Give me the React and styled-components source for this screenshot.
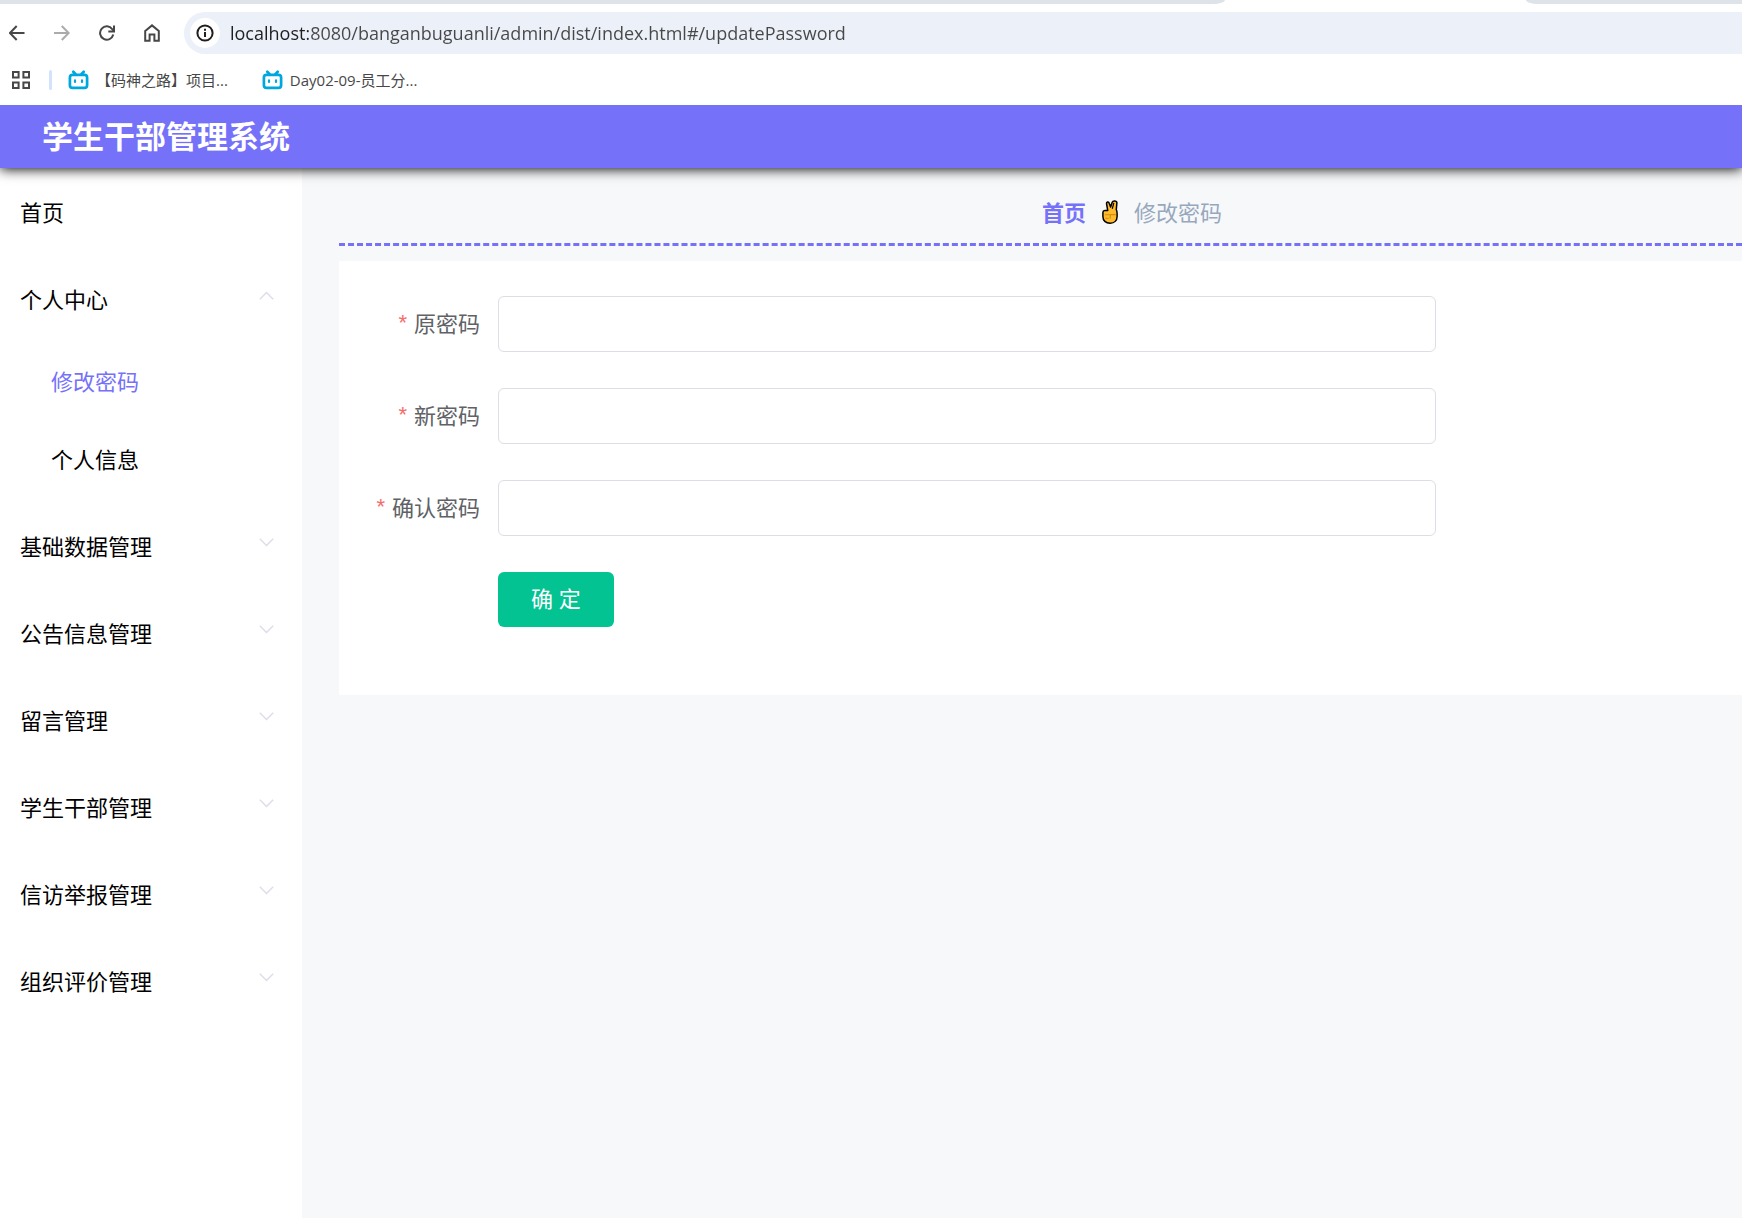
import React from "react";
import styled, { createGlobalStyle } from "styled-components";

const colors = {
  primary: "#7571f9",
  page: "#f7f8fa",
  success: "#02c391",
  label: "#606266",
  muted: "#97a8be",
  danger: "#f56c6c",
  border: "#dcdde6",
  chrome: "#474747",
};

const GlobalStyle = createGlobalStyle`
  *, *::before, *::after { box-sizing: border-box; }
  html, body { margin: 0; padding: 0; }
  body {
    background: #fff;
    font-family: "Open Sans", "Noto Sans CJK SC", sans-serif;
  }
  button, input { font-family: inherit; }
`;

const Page = styled.div`
  display: flex;
  flex-direction: column;
  min-height: 100vh;
`;

/* ---------- browser chrome ---------- */

const TabStrip = styled.div`
  display: flex;
  justify-content: space-between;
  height: 4px;
`;

const TabEdge = styled.div`
  flex: ${(p) => p.$grow} 1 0;
  background: #dee3ea;
  border-radius: ${(p) => (p.$side === "left" ? "0 0 12px 0 / 0 0 4px 0" : "0 0 0 12px / 0 0 0 4px")};
`;

const ActiveTab = styled.div`
  flex: 301 1 0;
`;

const Toolbar = styled.div`
  display: flex;
  align-items: center;
  padding: 8px 0 0 4px;
`;

const NavButton = styled.button`
  display: flex;
  align-items: center;
  justify-content: center;
  width: 25px;
  height: 25px;
  margin-right: 20px;
  padding: 0;
  border: 0;
  background: none;
  color: ${colors.chrome};
  opacity: ${(p) => (p.disabled ? 0.45 : 1)};
`;

const AddressBar = styled.div`
  flex: 1;
  display: flex;
  align-items: center;
  gap: 10px;
  height: 42px;
  padding-left: 6px;
  border-radius: 21px 0 0 21px;
  background: #ebf0f9;
`;

const SiteInfo = styled.button`
  display: flex;
  align-items: center;
  justify-content: center;
  width: 30px;
  height: 30px;
  padding: 0;
  border: 0;
  border-radius: 50%;
  background: #fff;
  color: #1f1f1f;
`;

const UrlInput = styled.input`
  flex: 1;
  min-width: 0;
  height: 30px;
  padding: 0;
  border: 0;
  outline: 0;
  color: ${colors.chrome};
  font-size: 18px;
  background: linear-gradient(90deg, #1f1f1f 78px, ${colors.chrome} 78px);
  background-clip: text;
  -webkit-background-clip: text;
  -webkit-text-fill-color: transparent;
`;

const Bookmarks = styled.nav`
  display: flex;
  align-items: center;
  height: 51px;
  padding-left: 12px;
`;

const AppsButton = styled.button`
  display: flex;
  padding: 0;
  border: 0;
  background: none;
  color: ${colors.chrome};
`;

const Divider = styled.span`
  width: 3px;
  height: 20px;
  margin: 0 16px 0 19px;
  border-radius: 2px;
  background: #d3e3fd;
`;

const Bookmark = styled.a`
  display: flex;
  align-items: center;
  gap: 7px;
  margin-right: 34px;
  color: ${colors.chrome};
  font-size: 15px;
  line-height: 20px;
  text-decoration: none;
  white-space: nowrap;
`;

/* ---------- application ---------- */

const Application = styled.div`
  flex: 1;
  display: flex;
  flex-direction: column;
  overflow: hidden;
`;

const Header = styled.header`
  position: relative;
  z-index: 1;
  padding: 8px 42px;
  background: ${colors.primary};
  box-shadow: 0 1px 12px #000;
`;

const Title = styled.h1`
  margin: 0;
  color: #fff;
  font-size: 31px;
  line-height: 47px;
  font-weight: 700;
`;

const Body = styled.div`
  flex: 1;
  display: flex;
`;

const Sidebar = styled.nav`
  flex: none;
  width: 302px;
  background: #fff;
`;

const MenuList = styled.ul`
  margin: 0;
  padding: 0;
  list-style: none;
`;

const SubMenuList = styled(MenuList)`
  padding-bottom: 4px;
`;

const MenuButton = styled.button`
  display: flex;
  align-items: center;
  justify-content: space-between;
  width: 100%;
  height: 87px;
  padding: 0 28px 0 20px;
  border: 0;
  background: none;
  color: #000;
  font-size: 22px;
  line-height: 32px;
  text-align: left;
`;

const MenuArrow = styled.svg`
  flex: none;
  margin-bottom: 6px;
  transform: ${(p) => (p.$open ? "rotate(180deg)" : "none")};
`;

const SubLink = styled.a`
  display: flex;
  align-items: center;
  height: 78px;
  padding-left: 51px;
  color: ${(p) => (p.$active ? colors.primary : "#000")};
  font-size: 22px;
  line-height: 32px;
  text-decoration: none;
`;

const Main = styled.main`
  flex: 1;
  min-width: 0;
  padding-left: 37px;
  background: ${colors.page};
`;

const Breadcrumb = styled.nav`
  display: flex;
  align-items: center;
  justify-content: center;
  gap: 16px;
  padding: 28px 0 15px 183px;
  border-bottom: 3px dashed ${colors.primary};
  font-size: 22px;
  line-height: 32px;
`;

const HomeLink = styled.a`
  color: ${colors.primary};
  font-weight: 700;
  text-decoration: none;
`;

const Current = styled.span`
  color: ${colors.muted};
`;

const Card = styled.section`
  margin-top: 15px;
  padding: 35px 36px 68px;
  background: #fff;
`;

const Form = styled.form`
  display: flex;
  flex-direction: column;
  gap: 36px;
  max-width: 1061px;
`;

const FormRow = styled.div`
  display: flex;
  align-items: center;
  padding-left: ${(p) => (p.$offset ? "123px" : "0")};
`;

const Label = styled.label`
  flex: none;
  display: flex;
  justify-content: flex-end;
  gap: 7px;
  width: 123px;
  padding: 0 18px 2px 0;
  color: ${colors.label};
  font-size: 22px;
  line-height: 32px;
  white-space: nowrap;
`;

const Required = styled.span`
  color: ${colors.danger};
  font-family: "Liberation Sans", sans-serif;
`;

const TextInput = styled.input`
  flex: 1;
  min-width: 0;
  height: 56px;
  padding: 0 16px;
  border: 1px solid ${colors.border};
  border-radius: 6px;
  background: #fff;
  color: ${colors.label};
  font-size: 22px;
`;

const SubmitButton = styled.button`
  height: 55px;
  padding: 0 33px 4px;
  border: 0;
  border-radius: 6px;
  background: ${colors.success};
  color: #fff;
  font-size: 22px;
  line-height: 32px;
`;

/* ---------- icons ---------- */

const strokeProps = { fill: "none", stroke: "currentColor", strokeWidth: 2 };

const BackIcon = () => (
  <svg width="16" height="16" viewBox="0 0 16 16" {...strokeProps}>
    <path d="M7.700 1 .9 8l6.800 7M1 8h14.500" />
  </svg>
);

const ForwardIcon = () => (
  <svg width="16" height="16" viewBox="0 0 16 16" {...strokeProps}>
    <path d="m7.800 1 6.900 7-6.900 7M14.500 8H0" />
  </svg>
);

const ReloadIcon = () => (
  <svg width="16" height="16" viewBox="0 0 16 16" {...strokeProps}>
    <path d="M14.300 9.600A6.700 6.700 0 1 1 13.300 4.200L14.600 6" />
    <path d="M15 .5v6H9.300" />
  </svg>
);

const HomeIcon = () => (
  <svg width="16" height="18" viewBox="0 0 16 18" {...strokeProps}>
    <path d="M1.200 7 8 1.400 14.800 7v9.800h-4.400v-6.200H5.600v6.200H1.200Z" />
  </svg>
);

const InfoIcon = () => (
  <svg width="18" height="18" viewBox="0 0 18 18" {...strokeProps}>
    <circle cx="9" cy="9" r="7.600" />
    <path d="M9 8v5M9 4.800v2" />
  </svg>
);

const AppsIcon = () => (
  <svg width="18" height="18" viewBox="0 0 18 18" {...strokeProps}>
    <path d="M1 1h5.600v5.600H1zM11.400 1H17v5.600h-5.600zM1 11.400h5.600V17H1zM11.400 11.400H17V17h-5.600z" />
  </svg>
);

const TvIcon = () => (
  <svg width="21" height="20" viewBox="0 0 21 20" fill="none" stroke="#00a7de" strokeWidth="2.700" strokeLinecap="round">
    <rect x="1.900" y="4.900" width="17.200" height="13" rx="2.600" />
    <path d="M5.300 1.800 7.600 4.200M15.700 1.800 13.400 4.200" />
    <path strokeWidth="2.200" d="M7 10.400v1.600M14 10.400v1.600" />
  </svg>
);

const ArrowIcon = ({ open }) => (
  <MenuArrow $open={open} width="15" height="9" viewBox="0 0 15 9" fill="none" stroke="#dcdde8" strokeWidth="1.400">
    <path d="m.8.8 6.700 6.800L14.200.8" />
  </MenuArrow>
);

const VictoryHand = () => (
  <svg width="16" height="24" viewBox="0 0 16 24" stroke="#000" strokeWidth="1.500" strokeLinejoin="round" strokeLinecap="round">
    <path
      fill="#fdbb2d"
      d="M.9 12.400c0-1 .8-1.900 1.900-2h2.900L4.600 4c-.4-2.200 2-2.700 2.600-.8L8.600 7l1.600-4.800c.7-1.900 4.900-1.600 4.700.6L14.300 9.600c.6 1 .8 2.400.8 4.200v2.600c0 4-2.700 6.800-7 6.800-4.400 0-7.200-2.600-7.200-6.600Z"
    />
    <path fill="none" strokeWidth="1.200" d="M11.700 3.400 10.400 8.400" />
    <path fill="none" stroke="#d88a12" strokeWidth="1.100" d="M3.200 14.800h5v3.400M8.200 14.600h5.200M3.600 18.200h2.600" />
  </svg>
);

/* ---------- data ---------- */

const menu = [
  { title: "首页" },
  {
    title: "个人中心",
    open: true,
    children: [
      { title: "修改密码", href: "#/updatePassword", active: true },
      { title: "个人信息", href: "#/center" },
    ],
  },
  { title: "基础数据管理", children: [] },
  { title: "公告信息管理", children: [] },
  { title: "留言管理", children: [] },
  { title: "学生干部管理", children: [] },
  { title: "信访举报管理", children: [] },
  { title: "组织评价管理", children: [] },
];

const fields = [
  { id: "password", label: "原密码" },
  { id: "newpassword", label: "新密码" },
  { id: "repassword", label: "确认密码" },
];

export default function App() {
  return (
    <>
      <GlobalStyle />
      <Page>
        <TabStrip>
          <TabEdge $side="left" $grow={1225} />
          <ActiveTab />
          <TabEdge $side="right" $grow={216} />
        </TabStrip>
        <Toolbar>
          <NavButton type="button" aria-label="后退"><BackIcon /></NavButton>
          <NavButton type="button" aria-label="前进" disabled><ForwardIcon /></NavButton>
          <NavButton type="button" aria-label="刷新"><ReloadIcon /></NavButton>
          <NavButton type="button" aria-label="主页"><HomeIcon /></NavButton>
          <AddressBar>
            <SiteInfo type="button" aria-label="网站信息"><InfoIcon /></SiteInfo>
            <UrlInput
              type="text"
              aria-label="地址栏"
              spellCheck={false}
              defaultValue="localhost:8080/banganbuguanli/admin/dist/index.html#/updatePassword"
            />
          </AddressBar>
        </Toolbar>
        <Bookmarks aria-label="书签">
          <AppsButton type="button" aria-label="应用"><AppsIcon /></AppsButton>
          <Divider />
          <Bookmark href="#"><TvIcon />【码神之路】项目...</Bookmark>
          <Bookmark href="#"><TvIcon />Day02-09-员工分...</Bookmark>
        </Bookmarks>

        <Application>
          <Header>
            <Title>学生干部管理系统</Title>
          </Header>
          <Body>
            <Sidebar aria-label="菜单">
              <MenuList>
                {menu.map((item) => (
                  <li key={item.title}>
                    <MenuButton type="button" aria-expanded={item.children ? Boolean(item.open) : undefined}>
                      {item.title}
                      {item.children && <ArrowIcon open={item.open} />}
                    </MenuButton>
                    {item.open && (
                      <SubMenuList>
                        {item.children.map((child) => (
                          <li key={child.title}>
                            <SubLink href={child.href} $active={child.active}>{child.title}</SubLink>
                          </li>
                        ))}
                      </SubMenuList>
                    )}
                  </li>
                ))}
              </MenuList>
            </Sidebar>
            <Main>
              <Breadcrumb aria-label="面包屑">
                <HomeLink href="#/">首页</HomeLink>
                <VictoryHand />
                <Current>修改密码</Current>
              </Breadcrumb>
              <Card>
                <Form onSubmit={(e) => e.preventDefault()}>
                  {fields.map((field) => (
                    <FormRow key={field.id}>
                      <Label htmlFor={field.id}>
                        <Required>*</Required>
                        {field.label}
                      </Label>
                      <TextInput id={field.id} type="password" />
                    </FormRow>
                  ))}
                  <FormRow $offset>
                    <SubmitButton type="submit">确 定</SubmitButton>
                  </FormRow>
                </Form>
              </Card>
            </Main>
          </Body>
        </Application>
      </Page>
    </>
  );
}
